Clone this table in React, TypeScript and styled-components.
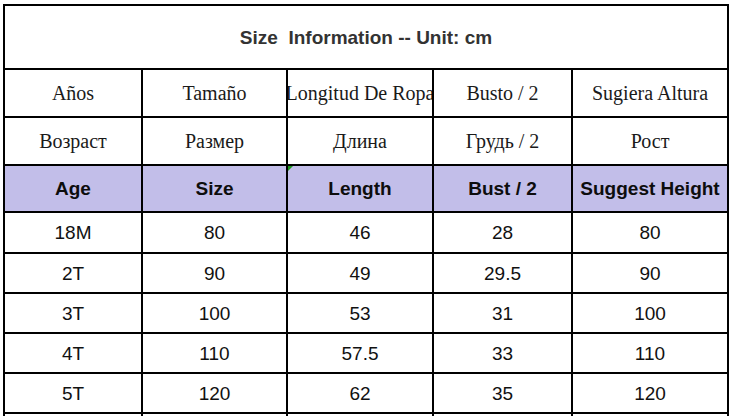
import React from 'react'
import styled, { createGlobalStyle, css } from 'styled-components'

const GlobalStyle = createGlobalStyle`
  html, body {
    margin: 0;
    padding: 0;
    background: #fff;
    overflow: hidden;
  }
`

type Kind = 'serif' | 'head' | 'data'

const spanish = ['Años', 'Tamaño', 'Longitud De Ropa', 'Busto / 2', 'Sugiera Altura']
const russian = ['Возраст', 'Размер', 'Длина', 'Грудь / 2', 'Рост']
const english = ['Age', 'Size', 'Length', 'Bust / 2', 'Suggest Height']

const rows = [
  ['18M', '80', '46', '28', '80'],
  ['2T', '90', '49', '29.5', '90'],
  ['3T', '100', '53', '31', '100'],
  ['4T', '110', '57.5', '33', '110'],
  ['5T', '120', '62', '35', '120'],
  // next row only shows its top border in the frame
  ['', '', '', '', ''],
]

export default function App() {
  return (
    <>
      <GlobalStyle />
      <Page>
        <Sheet>
          <TitleCell>Size  Information -- Unit: cm</TitleCell>
          {spanish.map((t) => (
            <Cell key={t} kind="serif">{t}</Cell>
          ))}
          {russian.map((t) => (
            <Cell key={t} kind="serif">{t}</Cell>
          ))}
          {english.map((t, i) => (
            <Cell key={t} kind="head" marked={i === 2}>{t}</Cell>
          ))}
          {rows.map((r, ri) =>
            r.map((v, ci) => (
              <Cell key={ri + '-' + ci} kind="data">{v}</Cell>
            ))
          )}
        </Sheet>
      </Page>
    </>
  )
}

const Page = styled.div`
  padding: 4px 0 0 3px;
`
const Sheet = styled.div`
  display: grid;
  width: 726px;
  box-sizing: border-box;
  grid-template-columns: 136px 143px 144px 137px 154px;
  grid-template-rows: 62px 46px 46px 45px 39px repeat(5, 38px);
  gap: 2px;
  padding: 2px;
  background: #000;
`
const TitleCell = styled.div`
  grid-column: 1 / -1;
  display: flex;
  align-items: center;
  justify-content: center;
  padding-top: 2px;
  background: #fff;
  white-space: pre;
  font-family: 'Liberation Sans', Arial, sans-serif;
  font-weight: bold;
  font-size: 19px;
  color: #333;
`
const Cell = styled.div<{ kind: Kind; marked?: boolean }>`
  position: relative;
  display: flex;
  align-items: center;
  justify-content: center;
  overflow: hidden;
  white-space: nowrap;
  background: #fff;
  color: #111;

  ${({ kind }) =>
    kind === 'serif'
      ? css`
          font-family: 'Liberation Serif', 'Times New Roman', serif;
          font-size: 20px;
          color: #1a1a1a;
        `
      : kind === 'head'
      ? css`
          font-family: 'Liberation Sans', Arial, sans-serif;
          font-weight: bold;
          font-size: 19px;
          background: #c2bee9;
          color: #0d0d0d;
        `
      : css`
          font-family: 'Liberation Sans', Arial, sans-serif;
          font-size: 19px;
          padding-top: 1px;
        `}

  ${({ marked }) =>
    marked &&
    css`
      &::before {
        content: '';
        position: absolute;
        top: 0;
        left: 0;
        border-top: 5px solid #1e9a1e;
        border-right: 5px solid transparent;
      }
    `}
`
